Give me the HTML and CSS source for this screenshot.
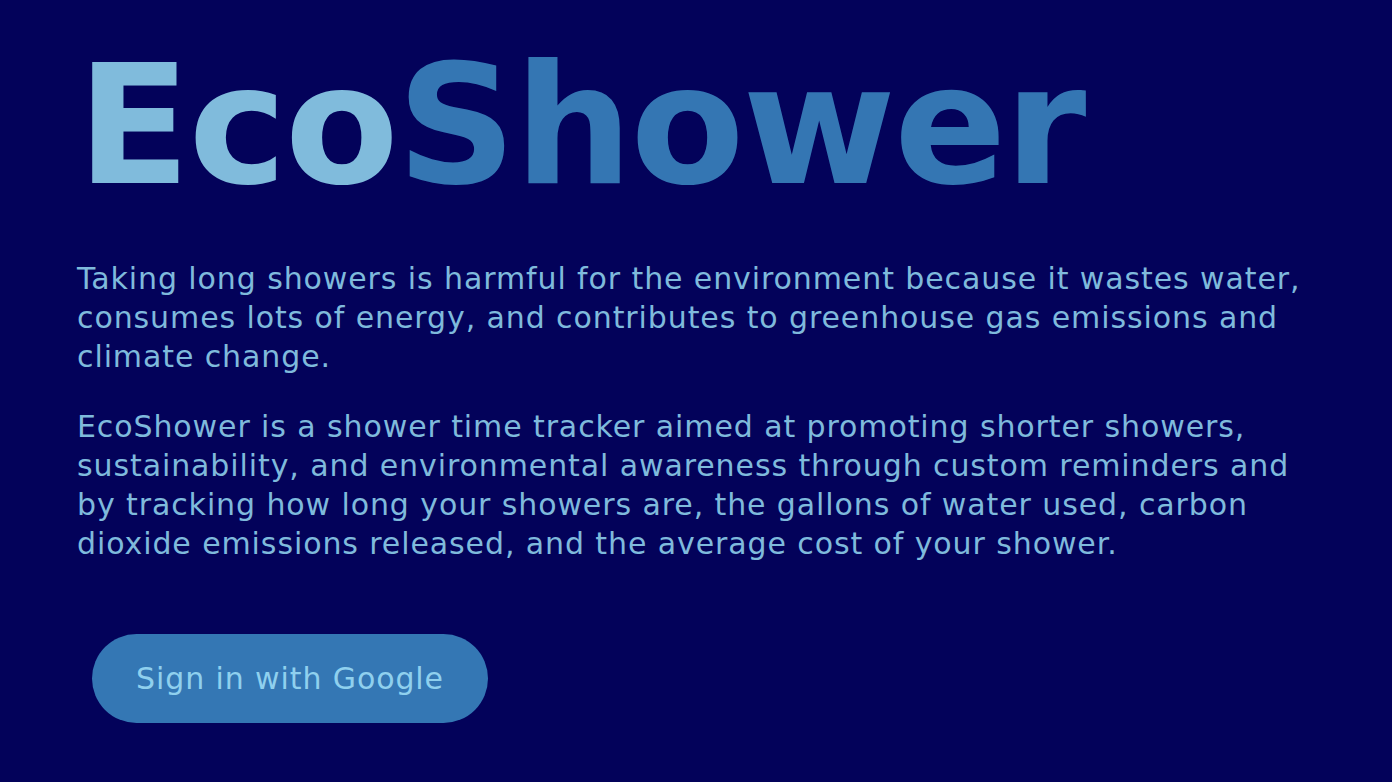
FILE: index.html
```html
<!DOCTYPE html>
<html lang="en">
<head>
<meta charset="utf-8">
<title>EcoShower</title>
<link rel="stylesheet" href="styles.css">
</head>
<body>
<main class="page">
  <h1 class="title"><span class="title-eco">Eco</span><span class="title-shower">Shower</span></h1>
  <section class="intro">
    <p>Taking long showers is harmful for the environment because it wastes water, consumes lots of energy, and contributes to greenhouse gas emissions and climate change.</p>
    <p>EcoShower is a shower time tracker aimed at promoting shorter showers, sustainability, and environmental awareness through custom reminders and by tracking how long your showers are, the gallons of water used, carbon dioxide emissions released, and the average cost of your shower.</p>
  </section>
  <button class="google-btn" type="button">Sign in with Google</button>
</main>
</body>
</html>
```
FILE: styles.css
```css
html, body {
  margin: 0;
  padding: 0;
  background: #03025a;
  height: 100%;
}
.page {
  padding: 43px 40px 0 77px;
  font-family: "DejaVu Sans", sans-serif;
  color: #7fbadc;
}
.title {
  margin: 0;
  font-size: 166px;
  line-height: 1;
  font-weight: 700;
  letter-spacing: -2px;
}
.title-eco { color: #80bbdc; }
.title-shower { color: #3476b3; }
.intro {
  margin-top: 50px;
  max-width: 1240px;
}
.intro p {
  margin: 0 0 31px 0;
  font-size: 30px;
  line-height: 39px;
  letter-spacing: 0.9px;
}
.google-btn {
  margin: 40px 0 0 15px;
  width: 396px;
  height: 89px;
  border: none;
  border-radius: 45px;
  background: #3477b4;
  color: #8fd0ee;
  font-family: "DejaVu Sans", sans-serif;
  font-size: 30px;
  letter-spacing: 0.9px;
  cursor: pointer;
}
```
